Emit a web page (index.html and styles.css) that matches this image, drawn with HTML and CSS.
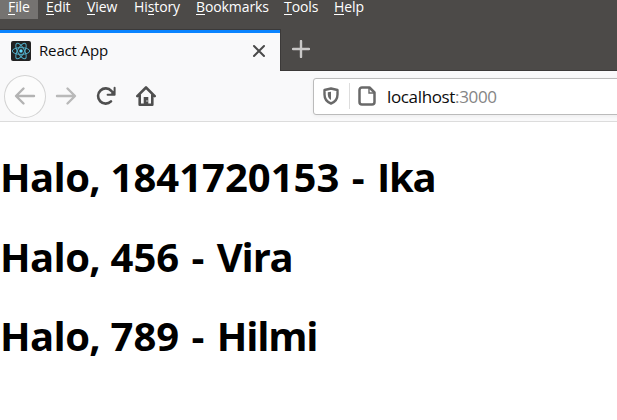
FILE: index.html
```
<!DOCTYPE html>
<html lang="en">
<head>
<meta charset="utf-8">
<title>React App</title>
<link rel="stylesheet" href="styles.css">
</head>
<body>
<div class="window">
  <nav class="menubar">
    <span class="menu file"><u>F</u>ile</span>
    <span class="menu edit"><u>E</u>dit</span>
    <span class="menu view"><u>V</u>iew</span>
    <span class="menu history">Hi<u>s</u>tory</span>
    <span class="menu bookmarks"><u>B</u>ookmarks</span>
    <span class="menu tools"><u>T</u>ools</span>
    <span class="menu help"><u>H</u>elp</span>
  </nav>
  <div class="tabs">
    <div class="tab">
      <svg class="favicon" width="20" height="20" viewBox="0 0 20 20">
        <rect width="20" height="20" rx="2" fill="#222"/>
        <g fill="none" stroke="#4fa9c2" stroke-width="1">
          <ellipse cx="10" cy="10" rx="8.700" ry="3.400"/>
          <ellipse cx="10" cy="10" rx="8.700" ry="3.400" transform="rotate(60 10 10)"/>
          <ellipse cx="10" cy="10" rx="8.700" ry="3.400" transform="rotate(120 10 10)"/>
        </g>
        <circle cx="10" cy="10" r="1.700" fill="#61dafb"/>
      </svg>
      <span class="tab-title">React App</span>
      <svg class="close" width="14" height="14" viewBox="0 0 14 14"><path d="M2 2l10 10M12 2L2 12" fill="none" stroke="#4a4a4a" stroke-width="2" stroke-linecap="round"/></svg>
    </div>
    <svg class="plus" width="18" height="18" viewBox="0 0 18 18"><path d="M9 1v16M1 9h16" fill="none" stroke="#c9c8c7" stroke-width="2.400" stroke-linecap="round"/></svg>
  </div>
  <div class="toolbar">
    <span class="back"><svg width="22" height="20" viewBox="0 0 22 20"><path d="M20 10H2.500M9.500 2.500L2 10l7.500 7.500" fill="none" stroke="#b3b3b3" stroke-width="2.400" stroke-linecap="round" stroke-linejoin="round"/></svg></span>
    <svg class="forward" width="22" height="20" viewBox="0 0 22 20"><path d="M2 10h17.500M12.500 2.500L20 10l-7.500 7.500" fill="none" stroke="#b9b9b9" stroke-width="2.400" stroke-linecap="round" stroke-linejoin="round"/></svg>
    <svg class="reload" width="20" height="20" viewBox="0 0 20 20"><path d="M15 15.400A7.600 7.600 0 1 1 15.300 4.900L17.500 7" fill="none" stroke="#4f4f4f" stroke-width="2.600" stroke-linecap="round"/><path d="M18.600 1.800v7h-7" fill="none" stroke="#4f4f4f" stroke-width="2" stroke-linecap="round" stroke-linejoin="round"/><path d="M18.700 4v4.800h-4.800z" fill="#4f4f4f"/></svg>
    <svg class="home" width="20" height="20" viewBox="0 0 20 20"><path d="M1.300 10.200L10 1.500l8.700 8.700M3.700 9v9.700h12.600V9" fill="none" stroke="#4f4f4f" stroke-width="2.600" stroke-linecap="round" stroke-linejoin="round"/><path d="M7.700 19v-8h4.600v8z" fill="#4f4f4f"/><circle cx="11" cy="15" r=".8" fill="#ddd"/></svg>
    <div class="urlbar">
      <svg class="shield" width="16" height="18" viewBox="0 0 16 18"><path d="M8 1.500L14.500 3v4.500c0 4.500-2.300 7.500-6.500 9-4.200-1.500-6.500-4.500-6.500-9V3z" fill="none" stroke="#696969" stroke-width="2.400" stroke-linejoin="round"/><path d="M8 4.700v8.300C6 11.700 4.800 10 4.800 7.500V5.300z" fill="#696969"/></svg>
      <span class="divider"></span>
      <svg class="page" width="18" height="20" viewBox="0 0 18 20"><path d="M4 1.500h7.500l5 5V16a2.500 2.500 0 0 1-2.500 2.500H4A2.500 2.500 0 0 1 1.500 16V4A2.500 2.500 0 0 1 4 1.500z" fill="none" stroke="#696969" stroke-width="2.500" stroke-linejoin="round"/><path d="M11 2v5h5.500" fill="none" stroke="#696969" stroke-width="1.400"/></svg>
      <span class="url">localhost<span class="port">:3000</span></span>
    </div>
  </div>
  <main class="content">
    <h1><span class="greeting">Halo,</span> 1841720153 <span class="dash">-</span> <span class="name">Ika</span></h1>
    <h1><span class="greeting">Halo,</span> 456 <span class="dash">-</span> <span class="name">Vira</span></h1>
    <h1><span class="greeting">Halo,</span> 789 <span class="dash">-</span> <span class="name">Hilmi</span></h1>
  </main>
</div>
</body>
</html>
```
FILE: styles.css
```
* { box-sizing: border-box; }
body { margin: 0; background: #fff; font-family: "Open Sans", "Noto Sans", sans-serif; }
svg { display: block; flex: none; }
.window { width: 617px; height: 420px; overflow: hidden; }
.menubar { display: flex; height: 29px; background: #4c4a48; color: #fff; font-size: 14px; line-height: 14px; }
.menu { flex: none; height: 19px; padding-left: 8px; white-space: nowrap; letter-spacing: -.1px; }
.menu u { text-decoration: none; display: inline-block; height: 15px; border-bottom: 1px solid #fff; }
.file { width: 38px; background: #757371; }
.edit { width: 41px; }
.view { width: 47px; }
.history { width: 62px; }
.bookmarks { width: 88px; }
.tools { width: 50px; }
.tabs { display: flex; height: 42px; background: #4c4a48; border-bottom: 1px solid #3b3938; }
.tab { display: flex; align-items: center; flex: none; width: 281px; height: 42px; padding: 3px 14px 2px 11px; background: #f9f9fa; border-top: 1px solid #3b3938; border-right: 1px solid #3b3938; box-shadow: inset 0 3px #0a84ff; }
.tab-title { margin: -2px 0 0 8px; flex: 1; font-size: 15px; line-height: 20px; letter-spacing: -.15px; color: #0c0c0d; }
.plus { margin: 11px 0 0 11px; }
.toolbar { display: flex; align-items: center; height: 51px; padding-left: 4px; background: #f9f9fa; border-bottom: 1px solid #dcdcdc; }
.back { display: flex; align-items: center; justify-content: center; flex: none; width: 42px; height: 43px; border: 1px solid #d3d3d3; border-radius: 50%; background: #fcfcfc; }
.forward { margin-left: 9px; }
.reload { margin-left: 19px; }
.home { margin-left: 20px; }
.urlbar { display: flex; align-items: center; flex: none; width: 330px; height: 37px; margin-left: 157px; padding-left: 9px; border: 1px solid #bbb; border-radius: 3px; background: #fff; box-shadow: 0 1px 4px rgba(0, 0, 0, .06); }
.divider { width: 1px; height: 26px; margin: 0 8px 0 10px; background: #ddd; }
.url { margin: 1px 0 0 11px; font-size: 17px; line-height: 24px; letter-spacing: -.35px; color: #0c0c0d; }
.port { color: #858585; }
.content { padding-top: 28px; }
h1 { margin: 0 0 26.500px; font-size: 40px; line-height: 53px; font-weight: 700; white-space: nowrap; }
.greeting { letter-spacing: -.6px; }
.dash { margin: 0 2px; }
.name { letter-spacing: -1.2px; }
```
